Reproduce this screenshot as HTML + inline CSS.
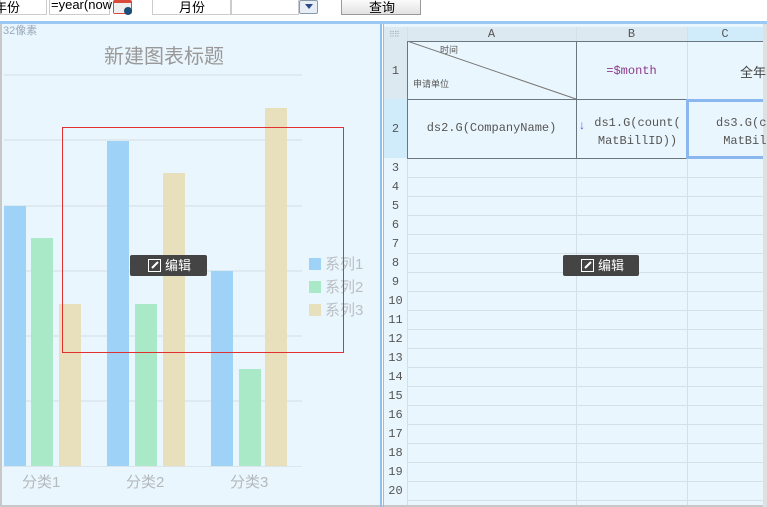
<!DOCTYPE html>
<html><head><meta charset="utf-8"><style>
*{margin:0;padding:0;box-sizing:border-box}
body{width:767px;height:507px;overflow:hidden;background:#fff;position:relative;font-family:"Liberation Sans","Noto Sans CJK SC",sans-serif}
.a{position:absolute}
.t{font-size:13px;color:#000}
.bar{position:absolute;bottom:41px;width:22px}
.b{background:#9ed3f7}.g{background:#a9e9c8}.y{background:#e8e0bd}
.grid{position:absolute;left:4px;width:298px;height:2px;background:#dfeaf0}
.leg{position:absolute;left:309px;font-size:15px;color:#b9bfc3}
.leg i{display:inline-block;width:12px;height:12px;vertical-align:-1px;margin-right:4px}
.cat{position:absolute;top:471px;font-size:15px;color:#b4b9bd}
.edit{position:absolute;height:21px;background:#444;border-radius:2px;color:#fff;font-size:13px;line-height:21px}
.edit svg{position:absolute;left:18px;top:4px}
.edit span{position:absolute;left:35px}
.rn{position:absolute;left:384px;width:23px;text-align:center;font-size:12px;color:#555;font-family:"Liberation Mono",monospace}
.hl{position:absolute;left:407px;width:356px;height:1px;background:#d3e0e8}
.vl{position:absolute;width:1px;background:#d3e0e8}
.mono{font-family:"Liberation Mono",monospace;font-size:12px;color:#555;position:absolute;text-align:center}
</style></head><body>
<div class="a" style="left:0;top:0;width:47px;height:15px;background:#fff;border:1px solid #ccc;border-top:0"></div>
<div class="a t" style="left:-6px;top:-3px">年份</div>
<div class="a" style="left:49px;top:0;width:61px;height:15px;background:#fff;border:1px solid #ccc;border-top:0"></div>
<div class="a t" style="left:51px;top:-3px">=year(now</div>
<div class="a" style="left:113px;top:0;width:19px;height:14px;background:#d84a3a;border-radius:2px"></div>
<div class="a" style="left:114px;top:3px;width:17px;height:10px;background:#eee"></div>
<div class="a" style="left:124px;top:7px;width:8px;height:8px;background:#1b4f7a;border-radius:50%"></div>
<div class="a" style="left:152px;top:0;width:79px;height:15px;background:#fff;border:1px solid #ccc;border-top:0"></div>
<div class="a t" style="left:179px;top:-3px">月份</div>
<div class="a" style="left:231px;top:0;width:68px;height:15px;background:#fff;border:1px solid #ccc;border-top:0"></div>
<div class="a" style="left:299px;top:0;width:19px;height:14px;background:#e8eef6;border:1px solid #8899aa;border-radius:2px"></div>
<div class="a" style="left:305px;top:4px;width:0;height:0;border-left:4px solid transparent;border-right:4px solid transparent;border-top:5px solid #2a4a8a"></div>
<div class="a" style="left:341px;top:0;width:80px;height:15px;background:linear-gradient(#fbfbfb,#e2e2e2);border:1px solid #999;border-top:0"></div>
<div class="a t" style="left:369px;top:-3px">查询</div>
<div class="a" style="left:0;top:21px;width:767px;height:3px;background:#9cc9f3"></div>
<div class="a" style="left:0;top:24px;width:380px;height:483px;background:#eaf6fd"></div>
<div class="a" style="left:0;top:24px;width:2px;height:483px;background:#c8c8c8"></div>
<div class="a" style="left:0;top:505px;width:767px;height:2px;background:#c8c8c8"></div>
<div class="a" style="left:3px;top:22px;font-size:11px;color:#9ab">32像素</div>
<div class="a" style="left:104px;top:40px;font-size:20px;color:#999">新建图表标题</div>
<div class="grid" style="top:74px"></div><div class="grid" style="top:139px"></div><div class="grid" style="top:205px"></div><div class="grid" style="top:270px"></div><div class="grid" style="top:335px"></div><div class="grid" style="top:400px"></div>
<div class="bar b" style="left:4px;top:206px"></div><div class="bar g" style="left:31px;top:238px"></div><div class="bar y" style="left:59px;top:304px"></div>
<div class="bar b" style="left:107px;top:141px"></div><div class="bar g" style="left:135px;top:304px"></div><div class="bar y" style="left:163px;top:173px"></div>
<div class="bar b" style="left:211px;top:271px"></div><div class="bar g" style="left:239px;top:369px"></div><div class="bar y" style="left:265px;top:108px"></div>
<div class="a" style="left:3px;top:466px;width:299px;height:1px;background:#dbe5ea"></div>
<div class="cat" style="left:22px">分类1</div><div class="cat" style="left:126px">分类2</div><div class="cat" style="left:230px">分类3</div>
<div class="leg" style="top:253px"><i class="b"></i>系列1</div>
<div class="leg" style="top:276px"><i class="g"></i>系列2</div>
<div class="leg" style="top:299px"><i class="y"></i>系列3</div>
<div class="a" style="left:62px;top:127px;width:282px;height:226px;border:1px solid #e03030"></div>
<div class="edit" style="left:130px;top:255px;width:77px"><svg width="13" height="13"><rect x="0.5" y="0.5" width="12" height="12" fill="none" stroke="#fff"/><path d="M4 9L10 3" stroke="#fff" stroke-width="2"/></svg><span>编辑</span></div>
<div class="a" style="left:380px;top:24px;width:2px;height:483px;background:#8fc0f0"></div>
<div class="a" style="left:383px;top:24px;width:1px;height:483px;background:#8fc0f0"></div>
<div class="a" style="left:384px;top:24px;width:379px;height:481px;background:#eaf6fd"></div>
<div class="a" style="left:763px;top:24px;width:4px;height:483px;background:#e0e0e0"></div>
<div class="a" style="left:384px;top:27px;width:379px;height:14px;background:#dde9f0"></div>
<div class="a" style="left:687px;top:27px;width:76px;height:14px;background:#d0ecfb"></div>
<div class="a" style="left:384px;top:41px;width:23px;height:58px;background:#dde9f0"></div>
<div class="a" style="left:384px;top:99px;width:23px;height:59px;background:#d0ecfb"></div>
<div class="mono" style="left:407px;top:27px;width:169px">A</div>
<div class="mono" style="left:576px;top:27px;width:111px">B</div>
<div class="mono" style="left:687px;top:27px;width:76px">C</div>
<div class="a" style="left:389px;top:30px;color:#aab;font-size:8px;letter-spacing:-1px">⠿⠿</div>
<div class="vl" style="left:576px;top:27px;height:478px"></div>
<div class="vl" style="left:687px;top:27px;height:478px"></div>
<div class="vl" style="left:407px;top:27px;height:478px"></div>
<div class="rn" style="top:64px">1</div><div class="rn" style="top:122px">2</div>
<div class="hl" style="top:177px"></div><div class="hl" style="top:196px"></div><div class="hl" style="top:215px"></div><div class="hl" style="top:234px"></div><div class="hl" style="top:253px"></div><div class="hl" style="top:272px"></div><div class="hl" style="top:291px"></div><div class="hl" style="top:310px"></div><div class="hl" style="top:329px"></div><div class="hl" style="top:348px"></div><div class="hl" style="top:367px"></div><div class="hl" style="top:386px"></div><div class="hl" style="top:405px"></div><div class="hl" style="top:424px"></div><div class="hl" style="top:443px"></div><div class="hl" style="top:462px"></div><div class="hl" style="top:481px"></div><div class="hl" style="top:500px"></div>
<div class="rn" style="top:161px">3</div><div class="rn" style="top:180px">4</div><div class="rn" style="top:199px">5</div><div class="rn" style="top:218px">6</div><div class="rn" style="top:237px">7</div><div class="rn" style="top:256px">8</div><div class="rn" style="top:275px">9</div><div class="rn" style="top:294px">10</div><div class="rn" style="top:313px">11</div><div class="rn" style="top:332px">12</div><div class="rn" style="top:351px">13</div><div class="rn" style="top:370px">14</div><div class="rn" style="top:389px">15</div><div class="rn" style="top:408px">16</div><div class="rn" style="top:427px">17</div><div class="rn" style="top:446px">18</div><div class="rn" style="top:465px">19</div><div class="rn" style="top:484px">20</div>
<div class="a" style="left:407px;top:41px;width:356px;height:118px;border:1px solid #6b7780;border-right:0"></div>
<div class="a" style="left:407px;top:99px;width:356px;height:1px;background:#6b7780"></div>
<div class="a" style="left:576px;top:41px;width:1px;height:118px;background:#6b7780"></div>
<svg class="a" style="left:407px;top:41px" width="170" height="59"><line x1="0" y1="0" x2="169" y2="58" stroke="#777"/></svg>
<div class="a" style="left:440px;top:43px;font-size:9px;color:#555">时间</div>
<div class="a" style="left:413px;top:77px;font-size:9px;color:#555">申请单位</div>
<div class="mono" style="left:576px;top:64px;width:111px;color:#8a3a8a">=$month</div>
<div class="a" style="left:740px;top:62px;font-size:13px;color:#444">全年</div>
<div class="mono" style="left:407px;top:121px;width:169px">ds2.G(CompanyName)</div>
<div class="mono" style="left:582px;top:114px;width:111px;line-height:18px">ds1.G(count(<br>MatBillID))</div>
<div class="a" style="left:579px;top:118px;color:#55f;font-size:12px">↓</div>
<div class="a" style="left:686px;top:99px;width:77px;height:60px;border:3px solid #8ab8ee;border-right:0"></div>
<div class="mono" style="left:716px;top:114px;width:70px;line-height:18px;text-align:left">ds3.G(co<br>&nbsp;MatBill</div>
<div class="edit" style="left:563px;top:255px;width:76px"><svg width="13" height="13"><rect x="0.5" y="0.5" width="12" height="12" fill="none" stroke="#fff"/><path d="M4 9L10 3" stroke="#fff" stroke-width="2"/></svg><span>编辑</span></div>
</body></html>
